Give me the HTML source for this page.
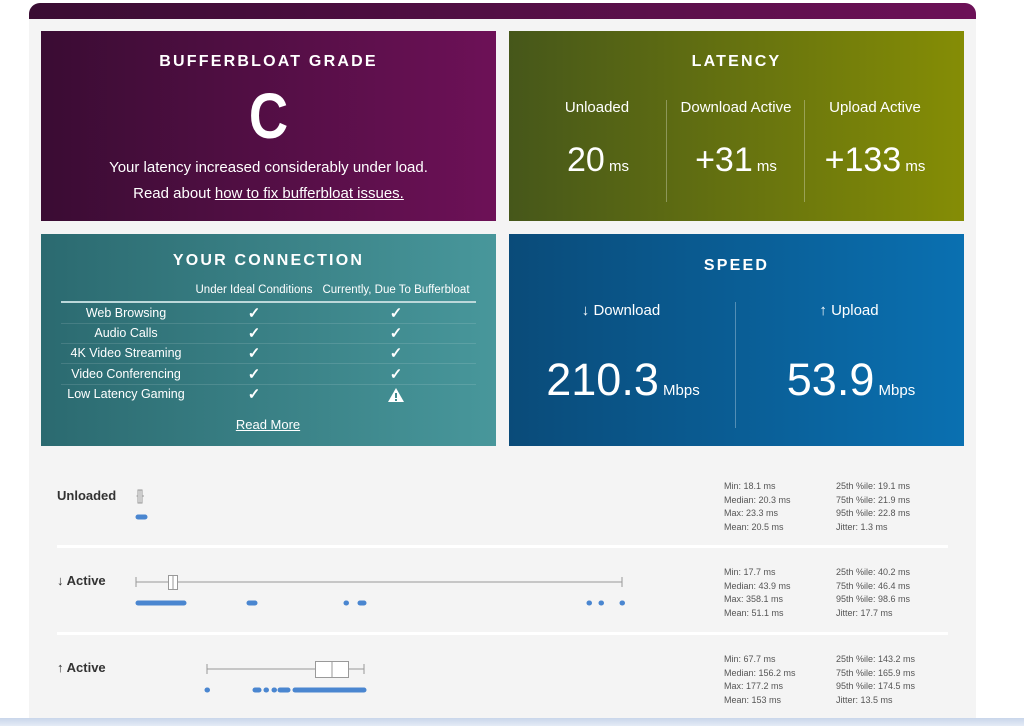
<!DOCTYPE html>
<html><head><meta charset="utf-8"><style>
*{margin:0;padding:0;box-sizing:border-box}
body{width:1024px;height:726px;background:#fff;position:relative;overflow:hidden;font-family:"Liberation Sans",sans-serif;color:#fff}
.a{position:absolute}
.topbar{left:29px;top:3px;width:947px;height:17px;border-radius:11px 11px 0 0;background:linear-gradient(90deg,#3a0d33,#6c1157)}
.bg{left:29px;top:19px;width:947px;height:699px;background:#f4f4f4}
.strip{left:0;top:718px;width:1024px;height:8px;background:linear-gradient(180deg,#c9d6ea,#e4ebf6)}
.card{position:absolute}
.t{position:absolute;left:0;right:0;text-align:center;white-space:nowrap}
.title{font-weight:bold;font-size:16px;letter-spacing:2.2px}
.c{font-size:11.5px}
.l{position:absolute;white-space:nowrap;text-align:center;transform:translateX(-50%)}
.ck{font-size:15px;font-weight:bold}
.stat{position:absolute;font-size:9px;color:#555;line-height:13.5px;white-space:nowrap}
.lab{position:absolute;font-size:13px;font-weight:bold;color:#333;white-space:nowrap}
</style></head><body>
<div class="a topbar"></div>
<div class="a bg"></div>
<div class="a strip"></div>

<div class="card" style="left:41px;top:31px;width:455px;height:190px;background:linear-gradient(90deg,#3a0c33,#6d1157)">
  <div class="t title" style="top:22px">BUFFERBLOAT GRADE</div>
  <div class="t" style="top:52px;font-size:64px;font-weight:bold;line-height:66px;transform:scaleX(0.85)">C</div>
  <div class="t" style="top:128px;font-size:15px">Your latency increased considerably under load.</div>
  <div class="t" style="top:154px;font-size:15px">Read about <u>how to fix bufferbloat issues.</u></div>
</div>

<div class="card" style="left:509px;top:31px;width:455px;height:190px;background:linear-gradient(90deg,#46571a,#858d05)">
  <div class="t title" style="top:22px">LATENCY</div>
  <div class="a" style="left:157px;top:69px;width:1px;height:102px;background:rgba(255,255,255,.3)"></div>
  <div class="a" style="left:295px;top:69px;width:1px;height:102px;background:rgba(255,255,255,.3)"></div>
  <div class="l" style="left:88px;top:68px;font-size:15px">Unloaded</div>
  <div class="l" style="left:227px;top:68px;font-size:15px">Download Active</div>
  <div class="l" style="left:366px;top:68px;font-size:15px">Upload Active</div>
  <div class="l" style="left:89px;top:110px;font-size:34px">20<span style="font-size:15px"> ms</span></div>
  <div class="l" style="left:227px;top:110px;font-size:34px">+31<span style="font-size:15px"> ms</span></div>
  <div class="l" style="left:366px;top:110px;font-size:34px">+133<span style="font-size:15px"> ms</span></div>
</div>

<div class="card" style="left:41px;top:234px;width:455px;height:212px;background:linear-gradient(90deg,#2b6a70,#48979b)">
  <div class="t title" style="top:18px">YOUR CONNECTION</div>
  <div class="l c" style="left:213px;top:50px">Under Ideal Conditions</div>
  <div class="l c" style="left:355px;top:50px">Currently, Due To Bufferbloat</div>
  <div class="a" style="left:20px;top:67px;width:415px;height:2px;background:#bcd8da"></div>
  <div class="a" style="left:20px;top:89px;width:415px;height:1px;background:rgba(255,255,255,.12)"></div>
  <div class="a" style="left:20px;top:109px;width:415px;height:1px;background:rgba(255,255,255,.12)"></div>
  <div class="a" style="left:20px;top:129px;width:415px;height:1px;background:rgba(255,255,255,.12)"></div>
  <div class="a" style="left:20px;top:150px;width:415px;height:1px;background:rgba(255,255,255,.12)"></div>
  <div class="l" style="left:85px;top:72px;font-size:12.5px">Web Browsing</div>
  <div class="l" style="left:85px;top:92px;font-size:12.5px">Audio Calls</div>
  <div class="l" style="left:85px;top:112px;font-size:12.5px">4K Video Streaming</div>
  <div class="l" style="left:85px;top:133px;font-size:12.5px">Video Conferencing</div>
  <div class="l" style="left:85px;top:153px;font-size:12.5px">Low Latency Gaming</div>
  <div class="l ck" style="left:213px;top:70px">✓</div><div class="l ck" style="left:355px;top:70px">✓</div>
  <div class="l ck" style="left:213px;top:90px">✓</div><div class="l ck" style="left:355px;top:90px">✓</div>
  <div class="l ck" style="left:213px;top:110px">✓</div><div class="l ck" style="left:355px;top:110px">✓</div>
  <div class="l ck" style="left:213px;top:131px">✓</div><div class="l ck" style="left:355px;top:131px">✓</div>
  <div class="l ck" style="left:213px;top:151px">✓</div>
  <svg class="a" style="left:346px;top:153px" width="18" height="16" viewBox="0 0 18 16"><path d="M9 1 L17 15 H1 Z" fill="#fff"/><rect x="8" y="6" width="2" height="5" fill="#3f8a8e"/><rect x="8" y="12" width="2" height="2" fill="#3f8a8e"/></svg>
  <div class="l" style="left:227px;top:183px;font-size:13px"><u>Read More</u></div>
</div>

<div class="card" style="left:509px;top:234px;width:455px;height:212px;background:linear-gradient(90deg,#0a4b79,#0a70b1)">
  <div class="t title" style="top:23px">SPEED</div>
  <div class="a" style="left:226px;top:68px;width:1px;height:126px;background:rgba(255,255,255,.3)"></div>
  <div class="l" style="left:112px;top:68px;font-size:15px">↓ Download</div>
  <div class="l" style="left:340px;top:68px;font-size:15px">↑ Upload</div>
  <div class="l" style="left:114px;top:120px;font-size:45px">210.3<span style="font-size:15px"> Mbps</span></div>
  <div class="l" style="left:342px;top:120px;font-size:45px">53.9<span style="font-size:15px"> Mbps</span></div>
</div>

<div class="lab" style="left:57px;top:488px">Unloaded</div>
<div class="lab" style="left:57px;top:573px">↓ Active</div>
<div class="lab" style="left:57px;top:660px">↑ Active</div>

<svg class="a" style="left:0;top:0" width="1024" height="726">
  <rect x="57" y="545" width="891" height="3" fill="#fff"/>
  <rect x="57" y="632" width="891" height="3" fill="#fff"/>
  <g stroke="#999" fill="#fff" stroke-width="1">
    <line x1="136.5" y1="496" x2="144" y2="496"/>
    <rect x="138" y="490" width="4" height="13"/>
    <line x1="140" y1="490" x2="140" y2="503"/>
    <line x1="136" y1="582" x2="622" y2="582"/>
    <line x1="136" y1="577" x2="136" y2="587"/><line x1="622" y1="577" x2="622" y2="587"/>
    <rect x="168.5" y="575.5" width="9" height="14"/>
    <line x1="173" y1="576" x2="173" y2="589"/>
    <line x1="207" y1="669" x2="364" y2="669"/>
    <line x1="207" y1="664" x2="207" y2="674"/><line x1="364" y1="664" x2="364" y2="674"/>
    <rect x="315.5" y="661.5" width="33" height="16"/>
    <line x1="332" y1="662" x2="332" y2="677"/>
  </g>
  <g stroke="#4a86d0" stroke-width="5" stroke-linecap="round">
    <line x1="138" y1="517" x2="145" y2="517"/>
    <line x1="138" y1="603" x2="184" y2="603"/>
    <line x1="249" y1="603" x2="255" y2="603"/>
    <line x1="346" y1="603" x2="346.5" y2="603"/>
    <line x1="360" y1="603" x2="364" y2="603"/>
    <line x1="589" y1="603" x2="589.5" y2="603"/>
    <line x1="601" y1="603" x2="601.5" y2="603"/>
    <line x1="622" y1="603" x2="622.5" y2="603"/>
    <line x1="207" y1="690" x2="207.5" y2="690"/>
    <line x1="255" y1="690" x2="259" y2="690"/>
    <line x1="266" y1="690" x2="266.5" y2="690"/>
    <line x1="274" y1="690" x2="274.5" y2="690"/>
    <line x1="280" y1="690" x2="288" y2="690"/>
    <line x1="295" y1="690" x2="364" y2="690"/>
  </g>
</svg>

<div class="stat" style="left:724px;top:480px">Min: 18.1 ms<br>Median: 20.3 ms<br>Max: 23.3 ms<br>Mean: 20.5 ms</div>
<div class="stat" style="left:836px;top:480px">25th %ile: 19.1 ms<br>75th %ile: 21.9 ms<br>95th %ile: 22.8 ms<br>Jitter: 1.3 ms</div>
<div class="stat" style="left:724px;top:566px">Min: 17.7 ms<br>Median: 43.9 ms<br>Max: 358.1 ms<br>Mean: 51.1 ms</div>
<div class="stat" style="left:836px;top:566px">25th %ile: 40.2 ms<br>75th %ile: 46.4 ms<br>95th %ile: 98.6 ms<br>Jitter: 17.7 ms</div>
<div class="stat" style="left:724px;top:653px">Min: 67.7 ms<br>Median: 156.2 ms<br>Max: 177.2 ms<br>Mean: 153 ms</div>
<div class="stat" style="left:836px;top:653px">25th %ile: 143.2 ms<br>75th %ile: 165.9 ms<br>95th %ile: 174.5 ms<br>Jitter: 13.5 ms</div>
</body></html>
